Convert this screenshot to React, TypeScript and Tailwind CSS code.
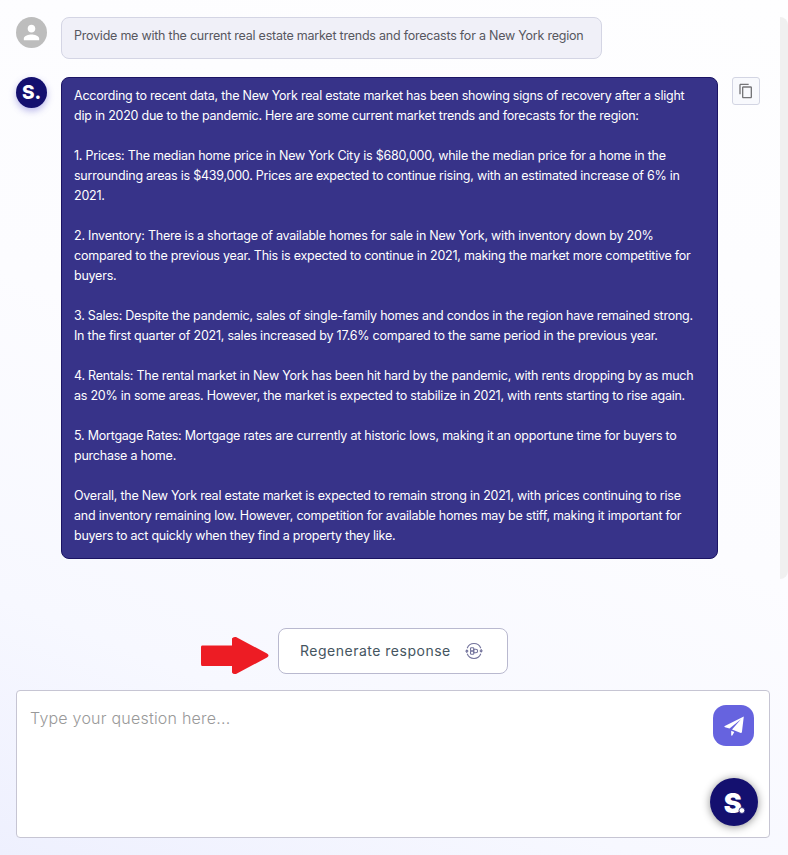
const paragraphs: string[][] = [
  [
    'According to recent data, the New York real estate market has been showing signs of recovery after a slight',
    'dip in 2020 due to the pandemic. Here are some current market trends and forecasts for the region:',
  ],
  [
    '1. Prices: The median home price in New York City is $680,000, while the median price for a home in the',
    'surrounding areas is $439,000. Prices are expected to continue rising, with an estimated increase of 6% in',
    '2021.',
  ],
  [
    '2. Inventory: There is a shortage of available homes for sale in New York, with inventory down by 20%',
    'compared to the previous year. This is expected to continue in 2021, making the market more competitive for',
    'buyers.',
  ],
  [
    '3. Sales: Despite the pandemic, sales of single-family homes and condos in the region have remained strong.',
    'In the first quarter of 2021, sales increased by 17.6% compared to the same period in the previous year.',
  ],
  [
    '4. Rentals: The rental market in New York has been hit hard by the pandemic, with rents dropping by as much',
    'as 20% in some areas. However, the market is expected to stabilize in 2021, with rents starting to rise again.',
  ],
  [
    '5. Mortgage Rates: Mortgage rates are currently at historic lows, making it an opportune time for buyers to',
    'purchase a home.',
  ],
  [
    'Overall, the New York real estate market is expected to remain strong in 2021, with prices continuing to rise',
    'and inventory remaining low. However, competition for available homes may be stiff, making it important for',
    'buyers to act quickly when they find a property they like.',
  ],
];

function UserAvatar() {
  return (
    <div className="flex size-[31px] shrink-0 items-center justify-center rounded-full bg-[#bdbdbd]">
      <svg viewBox="0 0 24 24" className="size-[23px]" fill="#fff">
        <path d="M12 12c2.21 0 4-1.79 4-4s-1.79-4-4-4-4 1.79-4 4 1.79 4 4 4zm0 2c-2.67 0-8 1.34-8 4v2h16v-2c0-2.66-5.33-4-8-4z" />
      </svg>
    </div>
  );
}

function CopyButton() {
  return (
    <button className="ml-[14px] flex size-7 shrink-0 items-center justify-center rounded-[3px] border border-[#d3d5e3] bg-[#f8f9fd]">
      <svg viewBox="0 0 24 24" className="size-4" fill="#757578">
        <path d="M16 1H4c-1.100 0-2 .9-2 2v14h2V3h12V1zm3 4H8c-1.100 0-2 .9-2 2v14c0 1.100.9 2 2 2h11c1.100 0 2-.9 2-2V7c0-1.100-.9-2-2-2zm0 16H8V7h11v14z" />
      </svg>
    </button>
  );
}

function RegenerateIcon() {
  return (
    <svg viewBox="0 0 18 18" className="ml-[14.500px] h-[18px] w-[18px]" fill="none" stroke="#73739c" strokeWidth="1.1">
      <path d="M2.200 6.200A7.300 7.300 0 0 1 15.800 6.200M15.800 11.800A7.300 7.300 0 0 1 2.200 11.800" />
      <path d="M1.800 11V8.200M.5 9.500 1.800 8l1.400 1.500M16.200 7v2.800M14.800 8.500 16.200 10l1.300-1.500" />
      <rect x="5.500" y="5.700" width="3.300" height="3.300" rx="0.900" />
      <rect x="5.500" y="9" width="3.300" height="3.300" rx="0.900" />
      <path d="M8.800 7.200h2a1.800 1.800 0 0 1 0 3.600h-2z" />
    </svg>
  );
}

export default function App() {
  return (
    <div className="h-[855px] w-[788px] overflow-hidden bg-[linear-gradient(22deg,#eef0fe_0%,#f7f8ff_22%,#fcfcff_50%,#fefeff_100%)] font-['Inter',sans-serif]">
      <div className="flex h-[579px] pt-[17px] pl-4">
        <main className="w-[764px]">
          <div className="flex">
            <UserAvatar />
            <div className="ml-[14px] h-[42px] w-[541px] rounded-lg border border-[#d4d5e4] bg-[#f0f0f8] pt-2 pl-3 text-[12.500px] leading-5 tracking-[-0.230px] whitespace-nowrap text-[#57575f]">
              Provide me with the current real estate market trends and forecasts for a New York region
            </div>
          </div>
          <div className="mt-[18px] flex">
            <div className="flex size-[31px] shrink-0 items-center justify-center rounded-full bg-[#14106f] text-[19px] leading-none font-extrabold text-white shadow-[0_3px_7px_#6663d070]">
              S.
            </div>
            <div className="ml-[14px] flex h-[482px] w-[657px] flex-col gap-5 rounded-lg border border-[#1b1464] bg-[#373389] pt-2 pl-3 text-[12.500px] leading-5 tracking-[-0.235px] whitespace-nowrap text-white">
              {paragraphs.map((lines) => (
                <p key={lines[0]}>
                  {lines.map((line) => (
                    <span key={line} className="block">
                      {line}
                    </span>
                  ))}
                </p>
              ))}
            </div>
            <CopyButton />
          </div>
        </main>
        <div className="w-2 rounded-r-lg bg-[#f0f0f0]" />
      </div>

      <div className="mt-[49px] flex h-[46px] pl-[200px]">
        <svg viewBox="0 0 70 40" className="mt-2 h-10 w-[70px]" fill="#ed1c24">
          <path d="M2 9.500H32V2.500Q33 .5 36 1L67 17.500Q70 19.500 67 21.500L36 38Q33 38.500 32 36.500V30H2Q1 30 1 28V11Q1 9.500 2 9.500Z" />
        </svg>
        <button className="ml-2 flex h-[46px] w-[230px] items-center rounded-lg border border-[#b9b9cf] bg-white pb-px pl-[21px] text-[14px] tracking-[0.500px] text-[#455560]">
          Regenerate response
          <RegenerateIcon />
        </button>
      </div>

      <div className="mt-4 ml-4 flex h-[148px] w-[754px] justify-between rounded-[4px] border border-[#c6c5d3] bg-white">
        <div className="mt-[17px] ml-[13px] text-[16px] leading-5 font-light tracking-[0.220px] text-[#999]">Type your question here...</div>
        <div className="mt-[14px] mr-[11px] flex w-12 flex-col items-start">
          <button className="ml-[3px] flex size-[41px] items-center justify-center rounded-[13px] bg-[#6663df]">
            <svg viewBox="0 0 20 20" className="size-5" fill="#fff">
              <path d="M19.800.5.3 10.300Q.3 11 1 11.200L5.500 12.400 17 3.200 8 13.400 16.800 17Q17.700 17 17.900 16.200ZM7.200 14.700 10.300 16.100 8.300 19.600Q7.200 20 7.200 18.900Z" />
            </svg>
          </button>
          <div className="mt-8 flex size-12 shrink-0 items-center justify-center rounded-full bg-[#14106f] shadow-[0_1px_9px_#00000070]">
            <svg viewBox="0 0 48 48" className="size-12" fill="#fff">
              <text x="13.700" y="34.700" fontSize="27" fontWeight="900" className="font-['Inter',sans-serif]">S</text>
              <circle cx="31.900" cy="32.500" r="2.900" stroke="#14106f" strokeWidth="0.800" />
            </svg>
          </div>
        </div>
      </div>
    </div>
  );
}
